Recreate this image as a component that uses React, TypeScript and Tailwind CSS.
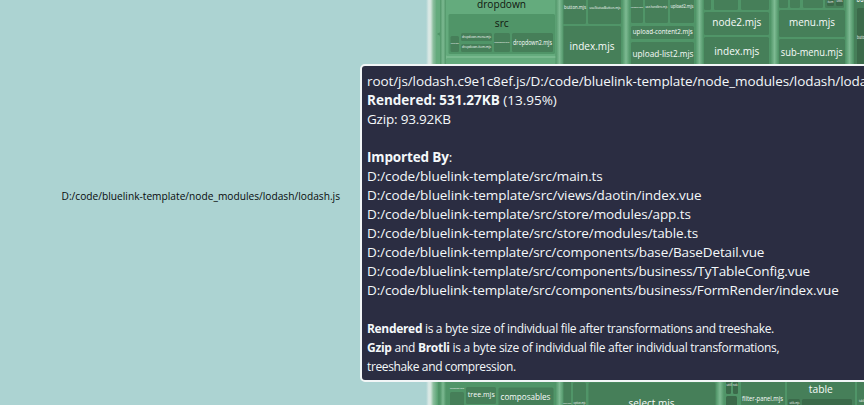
import React from "react";

type Box = [x: number, y: number, w: number, h: number, fill: string];
type Label = [text: string, cx: number, baseline: number, size: number, width: number, fill?: string];

const MID = "#467f59";
const DEEP = "#3b6a4a";
const SRC = "#509568";
const LIGHT = "#64ab7d";

const boxes: Box[] = [
  [436, -4, 4, 37, "#64ab7d"],
  [436, 35, 4, 40, "#64ab7d"],
  [445, -4, 113, 80, "#78b98e"],
  [446, -4, 111, 60, LIGHT],
  [446, 58, 111, 20, LIGHT],
  [448.5, 14, 106.5, 40, SRC],
  [450.5, 36, 8.5, 16, MID],
  [461, 33, 31, 8, MID],
  [461, 44, 31, 8, MID],
  [494, 33, 16, 19, MID],
  [512, 33, 41, 19, MID],
  [562, -4, 24, 28, MID],
  [588, -4, 33, 28, MID],
  [562, 26, 59, 50, MID],
  [631, -4, 12, 27, MID],
  [645, -4, 23, 27, MID],
  [670, -4, 24, 27, MID],
  [631, 26, 63, 13, MID],
  [631, 42, 63, 36, MID],
  [704, -4, 7, 14, MID],
  [714, -4, 24, 14, MID],
  [741, -4, 28, 14, MID],
  [704, 12, 65, 23, MID],
  [704, 37, 65, 40, MID],
  [779, -4, 9, 12, MID],
  [790, -4, 10, 12, MID],
  [803, -4, 20, 12, MID],
  [825, -4, 19, 12, MID],
  [827, -2, 7, 8, DEEP],
  [836, -2, 7, 8, DEEP],
  [779, 10, 66, 27, MID],
  [779, 39, 66, 40, MID],
  [854, -4, 20, 84, MID],
  [857, 8, 20, 70, DEEP],
  [450, 392, 14, 20, MID],
  [466, 387, 30, 17, MID],
  [498.5, 387.5, 55, 26, MID],
];

const lowerBoxes: Box[] = [
  [562, 376, 302, 30, "#509568"],
  [563, 376, 8, 40, MID],
  [573, 382.5, 13, 30, MID],
  [588.5, 382.5, 127, 30, MID],
  [726, 374, 5, 20, DEEP],
  [733, 374, 5, 20, DEEP],
  [726, 396, 11, 20, DEEP],
  [741, 376, 44, 40, MID],
  [787, 376, 68, 40, MID],
  [788, 399, 12, 12, DEEP],
  [802, 399, 50, 16, DEEP],
  [857, 376, 12, 40, MID],
];

const W = "#f8fbf9";
const INK = "#10150f";
const labels: Label[] = [
  ["dropdown", 501.5, 8, 11.5, 49, INK],
  ["src", 501.8, 27, 11.5, 14, INK],
  ["dropdown-menu.mjs", 476.5, 38.2, 4, 29],
  ["dropdown-item.mjs", 476.5, 48.2, 4, 29],
  ["dropdown.mjs", 501.8, 43.3, 2.2, 15],
  ["item.mjs", 454.8, 44, 2, 8],
  ["dropdown2.mjs", 532.5, 45, 7.3, 39],
  ["index", 502, 72, 11, 24, INK],
  ["button.mjs", 575, 9, 5.5, 22],
  ["useStatusButton.mjs", 605, 9, 4, 31],
  ["index.mjs", 592, 50, 11.3, 45],
  ["upload.mjs", 636.8, 7.5, 2.3, 12],
  ["use-handlers.mjs", 656.4, 7.5, 3.4, 22],
  ["upload2.mjs", 682, 7.5, 4.8, 23],
  ["upload-content2.mjs", 662.8, 34, 7.7, 60],
  ["upload-list2.mjs", 663, 56.5, 9.2, 61],
  ["node2.mjs", 736.8, 26, 11.3, 49],
  ["index.mjs", 736.8, 55, 11.3, 45],
  ["menu.mjs", 812, 26, 11.3, 46],
  ["sub-menu.mjs", 811.8, 56, 10, 62],
  ["item", 830.5, 3.3, 2.6, 6],
  ["utils", 839.5, 2.3, 2.6, 6],
  ["button2", 867, 2, 10, 21],
  ["button.mjs", 865, 39, 5, 16],
  ["checkbox.mjs", 457, 389, 2.5, 14],
  ["tree.mjs", 481.3, 397, 7.8, 27],
  ["composables", 525.5, 400, 9.4, 50],
  ["index.mjs", 567, 403.5, 2.5, 8],
  ["option.mjs", 579.5, 404, 3, 12],
  ["select.mjs", 651.5, 406.5, 11.3, 46],
  ["util", 729, 386, 3, 5],
  ["node", 735.2, 386, 3, 5],
  ["filter-panel.mjs", 762.5, 401, 6.3, 41],
  ["table", 820.8, 393, 11.3, 24],
  ["utils.mjs", 794.5, 404, 3, 10],
  ["table", 862, 402, 3, 6],
];

const dividers: [x: number, h: number][] = [
  [559.5, 405],
  [626, 70],
  [699.5, 70],
  [774.5, 70],
  [849.5, 70],
];

function Treemap() {
  return (
    <svg
      className="col-start-1 row-start-1 block h-[405px] w-[864px] font-['Open_Sans','Noto_Sans',sans-serif]"
      viewBox="0 0 864 405"
    >
      <defs>
        <linearGradient id="edge">
          <stop offset="0" stopColor="#acd3d2" />
          <stop offset="0.24" stopColor="#dce9e6" />
          <stop offset="0.4" stopColor="#d3e5dc" />
          <stop offset="0.6" stopColor="#8bbf9e" />
          <stop offset="1" stopColor="#56a070" />
        </linearGradient>
        <linearGradient id="ridge">
          <stop offset="0" stopColor="#509568" />
          <stop offset="0.5" stopColor="#7dba92" />
          <stop offset="1" stopColor="#509568" />
        </linearGradient>
      </defs>
      <rect width="864" height="405" fill="#acd3d2" />
      <rect x="435" width="429" height="405" fill="#509568" />
      <rect x="426" width="12" height="405" fill="url(#edge)" />
      {[...boxes, ...lowerBoxes].map(([x, y, w, h, fill], i) => (
        <rect key={i} x={x} y={y} width={w} height={h} rx="1.5" fill={fill} />
      ))}
      <rect x="440" width="6" height="405" fill="url(#ridge)" />
      {dividers.map(([x, h]) => (
        <rect key={x} x={x - 4} width="8" height={h} fill="url(#ridge)" />
      ))}
      <rect x="716" y="375" width="8" height="30" fill="url(#ridge)" />
      {labels.map(([text, x, y, size, width, fill], i) => (
        <text
          key={i}
          x={x}
          y={y}
          textAnchor="middle"
          fontSize={size}
          textLength={width}
          lengthAdjust="spacingAndGlyphs"
          fill={fill ?? W}
        >
          {text}
        </text>
      ))}
      <text
        x="61.5"
        y="200"
        fontSize="10.8"
        textLength="278.5"
        lengthAdjust="spacingAndGlyphs"
        fill="#080b0d"
      >
        D:/code/bluelink-template/node_modules/lodash/lodash.js
      </text>
    </svg>
  );
}

function Tooltip() {
  return (
    <div className="absolute left-[360px] top-[64px] h-[318px] w-[560px] whitespace-nowrap rounded-[5px] border-2 border-[#f2f6f7] bg-[#2b2d42] pl-[5px] pt-[6px] font-['Open_Sans','Noto_Sans',sans-serif] text-[13.5px] leading-[19px] text-[#f4f8fa]">
      <div className="tracking-[-0.09px]">
        root/js/lodash.c9e1c8ef.js/D:/code/bluelink-template/node_modules/lodash/lodash.js
      </div>
      <div className="tracking-[0px]">
        <b>Rendered: 531.27KB</b> (13.95%)
      </div>
      <div className="tracking-[-0.2px]">Gzip: 93.92KB</div>
      <div className="mt-[19px] tracking-[-0.15px]">
        <b>Imported By</b>:
      </div>
      <div className="tracking-[-0.09px]">
        <div>D:/code/bluelink-template/src/main.ts</div>
        <div className="tracking-[-0.07px]">D:/code/bluelink-template/src/views/daotin/index.vue</div>
        <div>D:/code/bluelink-template/src/store/modules/app.ts</div>
        <div>D:/code/bluelink-template/src/store/modules/table.ts</div>
        <div className="tracking-[-0.11px]">D:/code/bluelink-template/src/components/base/BaseDetail.vue</div>
        <div className="tracking-[-0.12px]">D:/code/bluelink-template/src/components/business/TyTableConfig.vue</div>
        <div className="tracking-[-0.13px]">D:/code/bluelink-template/src/components/business/FormRender/index.vue</div>
      </div>
      <div className="mt-[19px] text-[12px] tracking-[-0.3px]">
        <div className="tracking-[-0.32px]">
          <b>Rendered</b> is a byte size of individual file after transformations and treeshake.
        </div>
        <div className="tracking-[-0.28px]">
          <b>Gzip</b> and <b>Brotli</b> is a byte size of individual file after individual transformations,
        </div>
        <div className="tracking-[-0.37px]">treeshake and compression.</div>
      </div>
    </div>
  );
}

export default function App() {
  return (
    <main className="relative grid h-[405px] w-[864px] overflow-hidden bg-[#acd3d2]">
      <Treemap />
      <Tooltip />
    </main>
  );
}
